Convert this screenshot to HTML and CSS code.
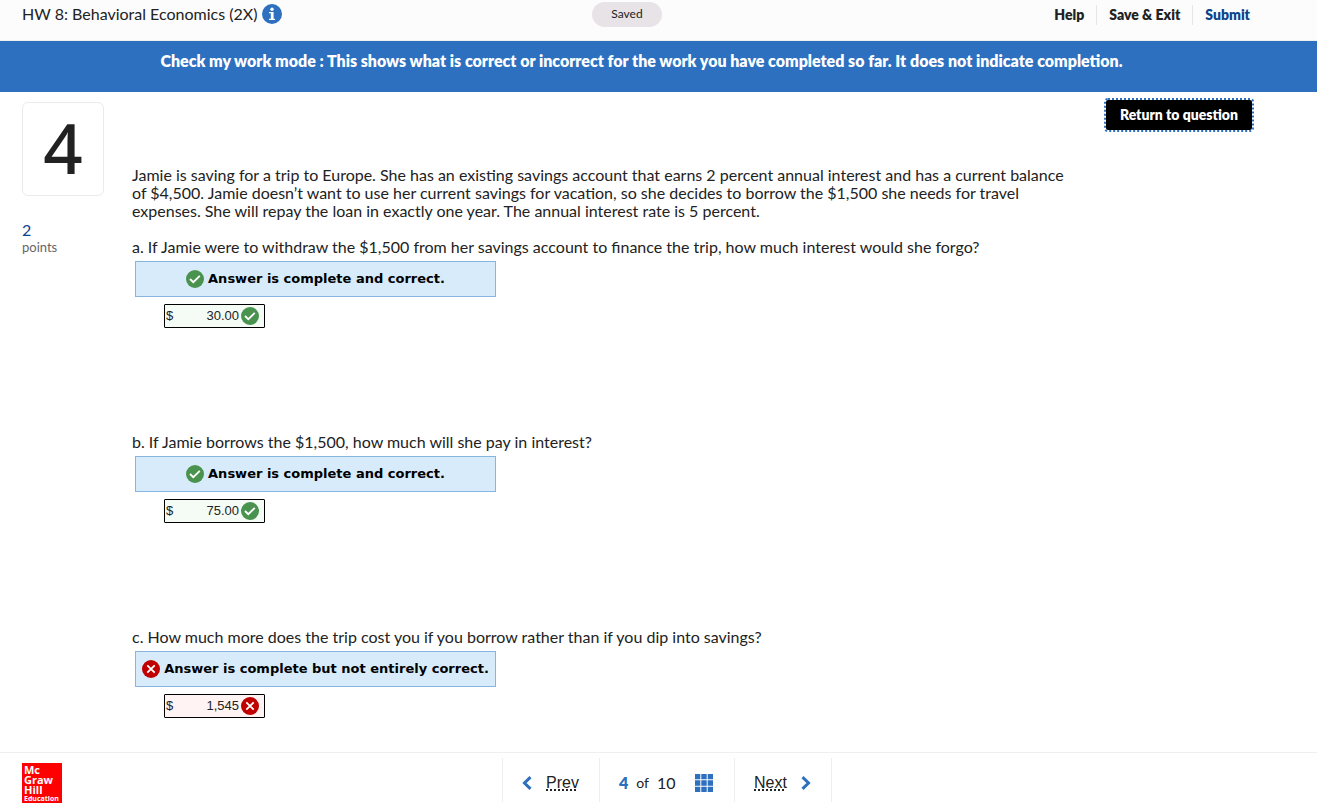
FILE: index.html
```html
<!DOCTYPE html>
<html lang="en">
<head>
  <meta charset="UTF-8">
  <meta name="viewport" content="width=device-width, initial-scale=1.0">
  <title>HW 8: Behavioral Economics (2X)</title>
  <link rel="stylesheet" href="styles.css">
</head>
<body>
  <svg class="sprite" aria-hidden="true">
    <symbol id="correct" viewBox="0 0 18 18">
      <circle cx="9" cy="9" r="9" fill="#4a934e"/>
      <path d="M4 9l3.300 3.200 6.500-6.400" fill="none" stroke="#fff" stroke-width="1.800"/>
    </symbol>
    <symbol id="incorrect" viewBox="0 0 18 18">
      <circle cx="9" cy="9" r="9" fill="#c00000"/>
      <path d="M5.300 5.300l7.400 7.400M12.700 5.300l-7.400 7.400" fill="none" stroke="#fff" stroke-width="1.800"/>
    </symbol>
  </svg>

  <header class="header">
    <div class="assignment">
      <span>HW 8: Behavioral Economics (2X)</span>
      <button class="info-btn" type="button" aria-label="Assignment info">
        <svg width="20" height="20" viewBox="0 0 20 20">
          <circle cx="10" cy="10" r="10" fill="#2c70bf"/>
          <circle cx="10" cy="5.300" r="1.700" fill="#fff"/>
          <path d="M7 8h4.600v6.700H13V16H7v-1.300h1.800V9.300H7z" fill="#fff"/>
        </svg>
      </button>
    </div>
    <span class="saved">Saved</span>
    <nav class="actions">
      <a href="#">Help</a>
      <a href="#">Save &amp; Exit</a>
      <a href="#" class="submit">Submit</a>
    </nav>
  </header>

  <div class="banner">Check my work mode : This shows what is correct or incorrect for the work you have completed so far. It does not indicate completion.</div>

  <main class="content">
    <aside class="sidebar">
      <div class="number">4</div>
      <div class="points">2</div>
      <div class="points-label">points</div>
    </aside>

    <section class="question">
      <p class="intro">Jamie is saving for a trip to Europe. She has an existing savings account that earns 2 percent annual interest and has a current balance of $4,500. Jamie doesn’t want to use her current savings for vacation, so she decides to borrow the $1,500 she needs for travel expenses. She will repay the loan in exactly one year. The annual interest rate is 5 percent.</p>

      <div class="part">
        <label for="answerA">a. If Jamie were to withdraw the $1,500 from her savings account to finance the trip, how much interest would she forgo?</label>
        <div class="result"><svg class="mark"><use href="#correct"/></svg>Answer is complete and correct.</div>
        <div class="answer correct">
          <span>$</span>
          <input type="text" id="answerA" value="30.00" readonly>
          <svg class="mark"><use href="#correct"/></svg>
        </div>
      </div>

      <div class="part">
        <label for="answerB">b. If Jamie borrows the $1,500, how much will she pay in interest?</label>
        <div class="result"><svg class="mark"><use href="#correct"/></svg>Answer is complete and correct.</div>
        <div class="answer correct">
          <span>$</span>
          <input type="text" id="answerB" value="75.00" readonly>
          <svg class="mark"><use href="#correct"/></svg>
        </div>
      </div>

      <div class="part">
        <label for="answerC">c. How much more does the trip cost you if you borrow rather than if you dip into savings?</label>
        <div class="result"><svg class="mark"><use href="#incorrect"/></svg>Answer is complete but not entirely correct.</div>
        <div class="answer incorrect">
          <span>$</span>
          <input type="text" id="answerC" value="1,545" readonly>
          <svg class="mark"><use href="#incorrect"/></svg>
        </div>
      </div>
    </section>

    <button class="return-btn" type="button">Return to question</button>
  </main>

  <footer class="footer">
    <div class="logo"><span>Mc</span><span>Graw</span><span>Hill</span><span class="small">Education</span></div>
    <nav class="pager">
      <a href="#" class="prev">
        <svg width="10" height="14" viewBox="0 0 10 14"><path d="M8.500 1.200L2.500 7l6 5.800" fill="none" stroke="#2c70bf" stroke-width="3"/></svg>
        <span>Prev</span>
      </a>
      <div class="position">
        <span class="current">4</span>
        <span class="of">of</span>
        <span>10</span>
        <button class="grid-btn" type="button" aria-label="Question list">
          <svg width="18" height="18" viewBox="0 0 18 18" fill="#2c70bf">
            <path d="M0 0h5.300v5.300H0zM6.300 0h5.400v5.300H6.300zM12.700 0H18v5.300h-5.300zM0 6.300h5.300v5.400H0zM6.300 6.300h5.400v5.400H6.300zM12.700 6.300H18v5.400h-5.300zM0 12.700h5.300V18H0zM6.300 12.700h5.400V18H6.300zM12.700 12.700H18V18h-5.300z"/>
          </svg>
        </button>
      </div>
      <a href="#" class="next">
        <span>Next</span>
        <svg width="10" height="14" viewBox="0 0 10 14"><path d="M1.500 1.200L7.500 7l-6 5.800" fill="none" stroke="#2c70bf" stroke-width="3"/></svg>
      </a>
    </nav>
  </footer>
</body>
</html>
```

FILE: styles.css
```css
* {
  box-sizing: border-box;
}

body {
  margin: 0;
  min-height: 100vh;
  display: flex;
  flex-direction: column;
  background: #fff;
  color: #222;
  font-family: Lato, "Open Sans", sans-serif;
  font-size: 16px;
  line-height: 18px;
}

a {
  color: inherit;
  text-decoration: none;
}

button {
  border: none;
  padding: 0;
  background: none;
  font-family: inherit;
  cursor: pointer;
}

svg {
  display: block;
  flex: none;
}

.sprite {
  display: none;
}

.mark {
  width: 18px;
  height: 18px;
}

/* header */

.header {
  display: grid;
  grid-template-columns: 1fr auto 1fr;
  align-items: start;
  height: 41px;
  padding: 2px 85px 0 22px;
  background: #fcfcfc;
  border-bottom: 1px solid #efefef;
}

.assignment {
  display: flex;
  align-items: center;
  gap: 5px;
  height: 24px;
}

.saved {
  padding: 3px 19px 4px;
  border-radius: 13px;
  background: #e8e3e7;
  font-size: 12px;
}

.actions {
  display: flex;
  justify-content: flex-end;
  margin-right: -30px;
  padding-top: 3px;
  font-size: 14px;
  font-weight: 800;
  line-height: 20px;
}

.actions a {
  padding: 0 12px;
}

.actions a + a {
  border-left: 1px solid #e6e6e6;
}

.actions .submit {
  color: #0b438c;
}

.banner {
  height: 51px;
  padding: 11px 34px 0 0;
  background: #2c70bf;
  color: #fff;
  font-weight: 800;
  text-align: center;
}

/* question */

.content {
  flex: 1;
  display: flex;
  align-items: flex-start;
  padding: 6px 63px 0 22px;
}

.sidebar {
  width: 82px;
  margin-top: 4px;
}

.number {
  height: 94px;
  border: 1px solid #ebebeb;
  border-radius: 6px;
  font-family: "Noto Sans", sans-serif;
  font-size: 69px;
  font-weight: 500;
  line-height: 88px;
  text-align: center;
}

.points {
  margin-top: 25px;
  color: #0b438c;
}

.points-label {
  color: #666;
  font-size: 13px;
  line-height: 16px;
}

.question {
  flex: 1;
  padding: 68px 28px 0;
}

.intro {
  max-width: 944px;
  margin: 0 0 18px;
}

.part {
  margin-bottom: 106px;
}

.part:last-child {
  margin-bottom: 33px;
}

.part label {
  display: block;
}

.result {
  display: flex;
  align-items: center;
  justify-content: center;
  gap: 4px;
  width: 361px;
  height: 36px;
  margin: 5px 3px 7px;
  border: 1px solid #85b5e0;
  background: #d7ebfa;
  color: #000;
  font-family: "DejaVu Sans", Verdana, sans-serif;
  font-size: 13px;
  font-weight: bold;
  white-space: nowrap;
}

.part + .part {
  margin-top: -1px;
}

.answer {
  display: flex;
  align-items: center;
  width: 101px;
  height: 24px;
  margin-left: 32px;
  padding: 0 5px 0 1px;
  border: 1px solid #000;
  border-radius: 1px;
  font-family: "Liberation Sans", Arial, sans-serif;
  font-size: 13px;
}

.answer input {
  flex: 1;
  min-width: 0;
  padding: 0 2px 0 0;
  border: none;
  background: transparent;
  color: inherit;
  font: inherit;
  text-align: right;
}

.answer.correct {
  background: #f5fbf5;
}

.answer.incorrect {
  background: #fff3f3;
}

.return-btn {
  height: 34px;
  margin-left: -150px;
  padding: 0 14px 2px;
  border: 2px dotted #2c70bf;
  border-radius: 4px;
  background: #000 padding-box;
  color: #fff;
  font-size: 14px;
  font-weight: 800;
}

/* footer */

.footer {
  display: grid;
  grid-template-columns: 1fr auto 1fr;
  align-items: start;
  height: 59px;
  padding: 5px 5px 0 22px;
  border-top: 1px solid #efefef;
}

.logo {
  display: flex;
  flex-direction: column;
  width: 40px;
  height: 40px;
  margin-top: 5px;
  padding: 2px;
  background: #f00;
  color: #fff;
  font-family: "Open Sans", sans-serif;
  font-size: 11px;
  font-weight: bold;
  line-height: 10px;
}

.logo .small {
  font-size: 7px;
  line-height: 8px;
}

.pager {
  display: flex;
  height: 44px;
  border-right: 1px solid #efefef;
}

.pager > * {
  display: flex;
  align-items: center;
  border-left: 1px solid #efefef;
}

.prev,
.next {
  gap: 14px;
  width: 97px;
  padding: 5px 19px 0;
  font-family: "Liberation Sans", Arial, sans-serif;
}

.prev span,
.next span {
  text-decoration: underline dotted 2px;
  text-underline-offset: 2px;
  text-decoration-skip-ink: none;
}

.position {
  gap: 8px;
  width: 135px;
  padding: 5px 21px 0 19px;
}

.current {
  color: #2c70bf;
  font-weight: 800;
}

.of {
  font-size: 14px;
}

.grid-btn {
  margin-left: auto;
}
```
